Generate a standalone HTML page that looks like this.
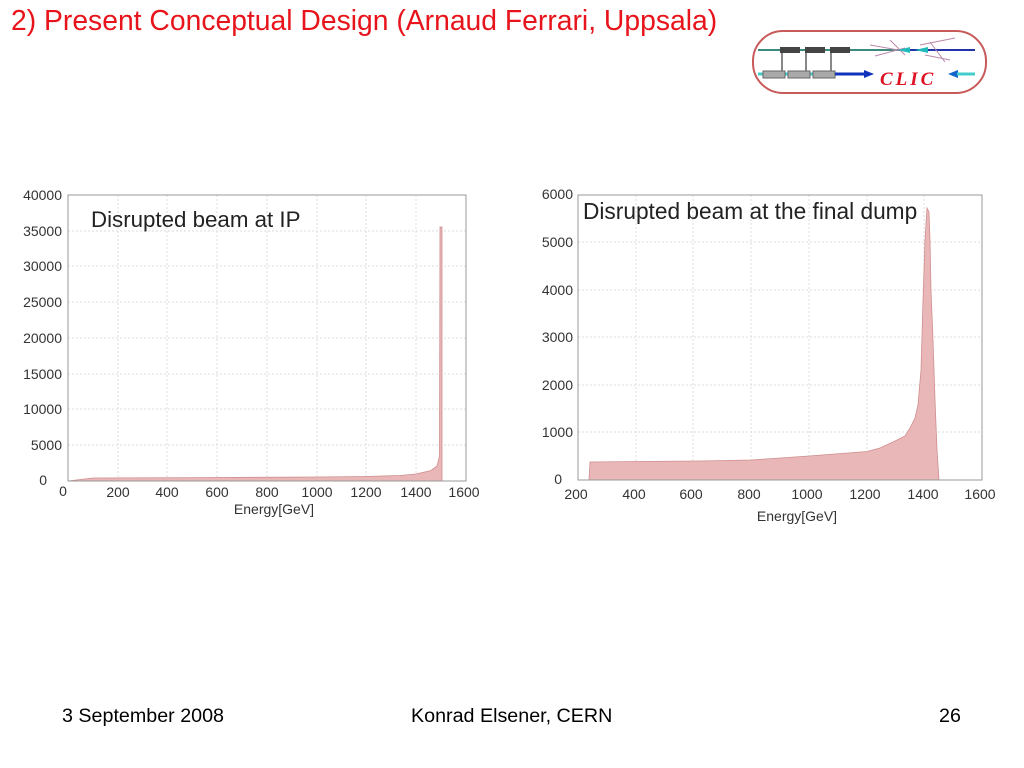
<!DOCTYPE html>
<html><head><meta charset="utf-8"><style>
html,body{margin:0;padding:0;background:#fff;}
body{width:1024px;height:768px;position:relative;overflow:hidden;font-family:"Liberation Sans",Arial,sans-serif;}
.t{position:absolute;white-space:nowrap;}
</style></head><body>
<div class="t" style="left:11px;top:4px;font-size:28.3px;color:#e8141b;">2) Present Conceptual Design (Arnaud Ferrari, Uppsala)</div>
<div class="t" style="left:62px;top:705px;font-size:19.7px;color:#000;">3 September 2008</div>
<div class="t" style="left:411px;top:705px;font-size:19.7px;color:#000;">Konrad Elsener, CERN</div>
<div class="t" style="left:939px;top:705px;font-size:19.7px;color:#000;">26</div>

<svg width="1024" height="768" style="position:absolute;left:0;top:0" xmlns="http://www.w3.org/2000/svg" font-family="Liberation Sans, Arial, sans-serif">
<!-- CLIC logo -->
<rect x="753" y="31" width="233" height="62" rx="30" fill="#fff" stroke="#c85a5a" stroke-width="2"/>
<line x1="758" y1="50" x2="975" y2="50" stroke="#3a8a80" stroke-width="2"/>
<line x1="905" y1="50" x2="975" y2="50" stroke="#2233aa" stroke-width="2"/>
<rect x="780" y="47" width="20" height="6" fill="#444"/><rect x="805" y="47" width="20" height="6" fill="#444"/><rect x="830" y="47" width="20" height="6" fill="#444"/>
<line x1="782" y1="53" x2="782" y2="72" stroke="#888" stroke-width="2"/><line x1="806" y1="53" x2="806" y2="72" stroke="#888" stroke-width="2"/><line x1="831" y1="53" x2="831" y2="72" stroke="#888" stroke-width="2"/>
<line x1="758" y1="74" x2="835" y2="74" stroke="#4cc" stroke-width="3"/>
<rect x="763" y="71" width="22" height="7" fill="#aaa" stroke="#666"/><rect x="788" y="71" width="22" height="7" fill="#aaa" stroke="#666"/><rect x="813" y="71" width="22" height="7" fill="#aaa" stroke="#666"/>
<line x1="835" y1="74" x2="866" y2="74" stroke="#1133bb" stroke-width="3"/><path d="M864 70 L874 74 L864 78Z" fill="#1133bb"/>
<text x="880" y="85" font-family="Liberation Serif, serif" font-style="italic" font-weight="bold" font-size="19" fill="#dd1122" letter-spacing="3">CLIC</text>
<path d="M948 74 L958 70 L958 78Z" fill="#1166cc"/><line x1="957" y1="74" x2="975" y2="74" stroke="#4cc" stroke-width="3"/>
<path d="M870 45 L910 52 M875 56 L905 48 M890 40 L905 55 M920 45 L955 38 M925 55 L950 60 M930 42 L945 62" stroke="#b8a" stroke-width="1"/>
<path d="M898 50 L910 47 L910 53Z M915 50 L928 47 L928 53Z" fill="#2bb"/>

<!-- Left plot -->
<g stroke="#ddd" stroke-width="1" stroke-dasharray="2,2">
<line x1="118" y1="195" x2="118" y2="481"/><line x1="167" y1="195" x2="167" y2="481"/><line x1="217" y1="195" x2="217" y2="481"/><line x1="267" y1="195" x2="267" y2="481"/><line x1="317" y1="195" x2="317" y2="481"/><line x1="366" y1="195" x2="366" y2="481"/><line x1="416" y1="195" x2="416" y2="481"/>
<line x1="68" y1="231" x2="466" y2="231"/><line x1="68" y1="266" x2="466" y2="266"/><line x1="68" y1="302" x2="466" y2="302"/><line x1="68" y1="338" x2="466" y2="338"/><line x1="68" y1="374" x2="466" y2="374"/><line x1="68" y1="409" x2="466" y2="409"/><line x1="68" y1="445" x2="466" y2="445"/>
</g>
<path d="M68 481 L93 478 L200 477.6 L317 477 L366 476.5 L400 475.5 L416 474 L431 470.5 L437 466 L439.5 456 L440 227 L442 227 L442 481Z" fill="#e9b7b7" stroke="#d08e8e" stroke-width="0.8"/>
<rect x="68" y="195" width="398" height="286" fill="none" stroke="#999" stroke-width="1"/>
<g font-size="14" fill="#333" text-anchor="end">
<text x="62" y="200">40000</text><text x="62" y="236">35000</text><text x="62" y="271">30000</text><text x="62" y="307">25000</text><text x="62" y="343">20000</text><text x="62" y="379">15000</text><text x="62" y="414">10000</text><text x="62" y="450">5000</text><text x="47" y="485">0</text>
</g>
<g font-size="14" fill="#333" text-anchor="middle">
<text x="63" y="496">0</text><text x="118" y="497">200</text><text x="167" y="497">400</text><text x="217" y="497">600</text><text x="267" y="497">800</text><text x="317" y="497">1000</text><text x="366" y="497">1200</text><text x="416" y="497">1400</text><text x="464" y="497">1600</text>
<text x="274" y="514">Energy[GeV]</text>
</g>
<text x="91" y="227" font-size="22.3" fill="#222">Disrupted beam at IP</text>

<!-- Right plot -->
<g stroke="#ddd" stroke-width="1" stroke-dasharray="2,2">
<line x1="636" y1="195" x2="636" y2="480"/><line x1="693" y1="195" x2="693" y2="480"/><line x1="751" y1="195" x2="751" y2="480"/><line x1="809" y1="195" x2="809" y2="480"/><line x1="867" y1="195" x2="867" y2="480"/><line x1="924" y1="195" x2="924" y2="480"/>
<line x1="578" y1="242" x2="982" y2="242"/><line x1="578" y1="290" x2="982" y2="290"/><line x1="578" y1="337" x2="982" y2="337"/><line x1="578" y1="385" x2="982" y2="385"/><line x1="578" y1="432" x2="982" y2="432"/>
</g>
<path d="M589 480 L590 462 L636 461.5 L700 461 L751 460 L809 456 L867 451.5 L880 448 L895 441 L905 436 L910 428 L915 418 L918 405 L921 370 L923 300 L925 240 L927 208 L929 212 L930 240 L931 290 L933 340 L935 400 L937 450 L939 480Z" fill="#e9b7b7" stroke="#d08e8e" stroke-width="0.8"/>
<rect x="578" y="195" width="404" height="285" fill="none" stroke="#999" stroke-width="1"/>
<g font-size="14" fill="#333" text-anchor="end">
<text x="573" y="199">6000</text><text x="573" y="247">5000</text><text x="573" y="295">4000</text><text x="573" y="342">3000</text><text x="573" y="390">2000</text><text x="573" y="437">1000</text><text x="562" y="484">0</text>
</g>
<g font-size="14" fill="#333" text-anchor="middle">
<text x="576" y="499">200</text><text x="634" y="499">400</text><text x="691" y="499">600</text><text x="749" y="499">800</text><text x="807" y="499">1000</text><text x="865" y="499">1200</text><text x="923" y="499">1400</text><text x="980" y="499">1600</text>
<text x="797" y="521">Energy[GeV]</text>
</g>
<text x="583" y="219" font-size="22.7" fill="#222">Disrupted beam at the final dump</text>
</svg>
</body></html>
